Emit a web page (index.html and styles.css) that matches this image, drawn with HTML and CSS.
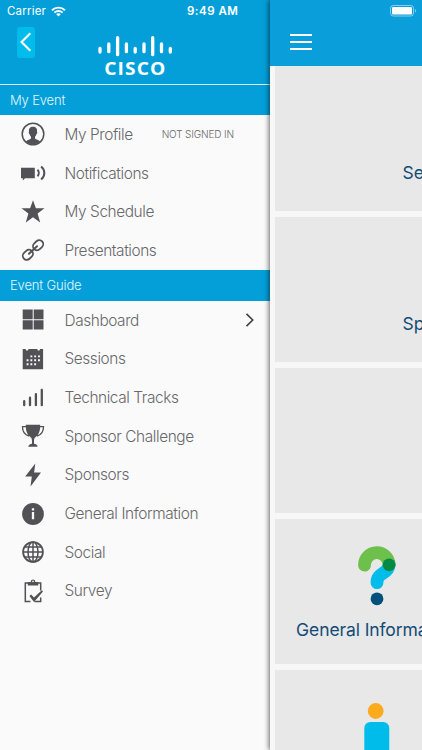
FILE: index.html
```html
<!DOCTYPE html>
<html lang="en">
<head>
<meta charset="utf-8">
<title>Event Guide</title>
<link rel="stylesheet" href="styles.css">
</head>
<body>
<div class="screen">
  <div class="status">
    <span class="carrier">Carrier</span>
    <svg class="wifi" width="15" height="11" viewBox="0 0 15 11" fill="none" stroke="#fff" stroke-width="1.9"><path d="M1 4.2C4.6.7 10.4.7 14 4.2M3.4 6.6c2.3-2.2 5.9-2.2 8.2 0"/><path d="M5.2 8.2c1.3-1.2 3.3-1.2 4.6 0L7.5 10.6z" fill="#fff" stroke="none"/></svg>
    <span class="time">9:49 AM</span>
    <svg class="battery" width="27" height="12" viewBox="0 0 27 12"><rect x=".5" y=".5" width="23" height="10.5" rx="2.8" fill="none" stroke="#fff" stroke-opacity=".5"/><rect x="2" y="2" width="20" height="7.5" rx="1.3" fill="#fff"/><path d="M25 4v3.6c1.6-.5 1.6-3.1 0-3.6z" fill="#fff" fill-opacity=".5"/></svg>
  </div>

  <nav class="menu">
    <header class="brand">
      <div class="back"><svg width="18" height="31" viewBox="0 0 18 31"><path d="M13.3 6.2 4.5 15l8.8 8.8" fill="none" stroke="#fff" stroke-width="2.1"/></svg></div>
      <svg class="logo" width="78" height="50" viewBox="96 34 78 50">
        <path d="M100 48.5v3.5M108.8 44v7.7M117.6 37.7v17M126.4 44v7.7M135.2 48.5v3.5M144 44v7.7M152.7 37.7v17M161.5 44v7.7M170.3 48.5v3.5" stroke="#fff" stroke-width="3.3" stroke-linecap="round"/>
        <text class="logo-text" x="104.3" y="74.9" textLength="62" lengthAdjust="spacingAndGlyphs">CISCO</text>
      </svg>
    </header>
    <h2 class="section">My Event</h2>
    <ul class="list">
      <li><svg class="icon" viewBox="0 0 24 24"><circle cx="12" cy="12" r="10.8" fill="none" stroke="#525256" stroke-width="1.5"/><path d="M12 4.7c-3 0-4.500 2-4 5-.6.1-.2 2.300.6 2.600.3 1.100.8 1.900 1.400 2.500v1.700c-1 1.300-3.700 1.200-5.200 2.900C8.200 22.800 15.800 22.800 19.200 19.400c-1.500-1.700-4.200-1.600-5.200-2.900v-1.700c.6-.6 1.100-1.400 1.400-2.500.8-.3 1.200-2.500.6-2.600.5-3-1-5-4-5z"/></svg><span>My Profile</span><small>NOT SIGNED IN</small></li>
      <li><svg class="icon wide" viewBox="0 0 26 24"><path d="M0 6.8h13.800v10.400H4L1.800 19.400v-2.200H0z"/><path d="M16.500 8.700c1.700 1.800 1.700 4.700 0 6.500M20.100 5.500c4.300 3.500 4.300 9.600 0 13" fill="none" stroke="#525256" stroke-width="2"/></svg><span>Notifications</span></li>
      <li><svg class="icon" viewBox="0 0 24 24"><path d="m12 .2 2.900 8h8.600l-6.900 5.400 2.600 9L12 17.300l-7.200 5.300 2.600-9L.5 8.200h8.600z"/></svg><span>My Schedule</span></li>
      <li><svg class="icon" viewBox="0 0 24 24" fill="none" stroke="#525256" stroke-width="1.8"><g transform="rotate(-43 12 12)"><rect x="-.5" y="8" width="11" height="8" rx="4"/><rect x="13.500" y="8" width="11" height="8" rx="4"/><path d="M6.500 12h11" stroke-width="2" stroke-linecap="round"/></g></svg><span>Presentations</span></li>
    </ul>
    <h2 class="section second">Event Guide</h2>
    <ul class="list">
      <li><svg class="icon" viewBox="0 0 24 24"><path d="M1.700 1.500h10v9.800h-10zM12.700 1.500h9.800v9.800h-9.800zM1.700 12.300h10v9.200h-10zM12.700 12.300h9.800v9.200h-9.800z"/></svg><span>Dashboard</span><svg class="chevron" width="10" height="16" viewBox="0 0 10 16"><path d="M1.500 1.800 7.700 8l-6.200 6.200" fill="none" stroke="#444448" stroke-width="1.700"/></svg></li>
      <li><svg class="icon" viewBox="0 0 24 24"><path d="M1.700 1.900h3c0 2 2.700 2 2.700 0h8.900c0 2 2.700 2 2.700 0h3.100v20.300H1.700z"/><path d="M9.400 9.400h10M5.600 13.300h13.500M5.600 17.200h9.800" fill="none" stroke="#fafafa" stroke-width="1.900" stroke-dasharray="1.900 1.900"/></svg><span>Sessions</span></li>
      <li><svg class="icon" viewBox="0 0 24 24"><path d="M3.200 20.200v-4M9 20.200v-7.500M14.900 20.200V9.200M20.800 20.200V4.800" stroke="#525256" stroke-width="2.300" stroke-linecap="round"/></svg><span>Technical Tracks</span></li>
      <li><svg class="icon" viewBox="0 0 24 24"><path d="M4.800.8h14.400c.2 5.500-1.300 10-4.500 12.200-1.500 1.100-1.700 2.200-1.700 4.500v2.200c1.500.3 3.400.8 3.700 3.100H7.300c.3-2.300 2.200-2.800 3.700-3.100v-2.200c0-2.300-.2-3.400-1.700-4.500C6.100 10.800 4.600 6.300 4.800.8z"/><path d="M5 2.700H1.500c0 5 2 8.100 6.500 9.300M19 2.700h3.500c0 5-2 8.100-6.500 9.300" fill="none" stroke="#525256" stroke-width="1.300"/></svg><span>Sponsor Challenge</span></li>
      <li><svg class="icon" viewBox="0 0 24 24"><path d="M14.300.5 4.200 13.500h6.600L9.500 23.500 20 9.600h-6.900z"/></svg><span>Sponsors</span></li>
      <li><svg class="icon" viewBox="0 0 24 24"><circle cx="12" cy="12" r="10.900"/><path d="M12 6.300v2.200M12 9.900v7.300" stroke="#fafafa" stroke-width="2.300"/></svg><span>General Information</span></li>
      <li><svg class="icon" viewBox="0 0 24 24" fill="none" stroke="#525256" stroke-width="1.500"><circle cx="12" cy="12" r="9.900" stroke-width="1.800"/><ellipse cx="12" cy="12" rx="5" ry="9.900"/><path d="M12 2v20M2 12h20M3.800 7.100h16.400M3.800 16.900h16.400"/></svg><span>Social</span></li>
      <li><svg class="icon" viewBox="0 0 24 24"><path d="M9.500 22.500H4.300V4h15.400v7.500M13.500 22.500h6.200v-4" fill="none" stroke="#525256" stroke-width="1.500"/><path d="M6.800 2.900h3C9.800-.3 14.300-.3 14.300 2.900h3v3.500H6.800z"/><circle cx="12" cy="2.400" r=".8" fill="#fafafa"/><path d="m8.500 17 1.600-1.500 2.900 3 7.800-7.200 1.200 1.100-9 10.700z"/></svg><span>Survey</span></li>
    </ul>
  </nav>

  <main class="dashboard">
    <header class="topbar"><div class="burger"><i></i><i></i><i></i></div></header>
    <div class="tiles">
      <section class="tile wide-tile"><span>Sessions</span></section>
      <section class="tile wide-tile"><span>Sponsors</span></section>
      <section class="tile"></section>
      <section class="tile info-tile">
        <svg width="38" height="61" viewBox="0 0 38 61" fill="none" stroke-linecap="round"><path d="M31.1 19.800C30.500 29.500 19 27 19 37.700" stroke="#00bceb" stroke-width="12.800"/><path d="M6.500 20.200A12.300 12.300 0 0 1 31.100 19.800" stroke="#6dc04b" stroke-width="12.800"/><circle cx="31.100" cy="19.800" r="6.400" fill="#048a43"/><circle cx="19" cy="53.800" r="6.400" fill="#03517b"/></svg>
        <span>General Information</span>
      </section>
      <section class="tile person-tile">
        <svg width="26" height="112" viewBox="0 0 26 112"><circle cx="11.700" cy="8" r="7.900" fill="#fbab1d"/><rect x="0.300" y="19" width="25" height="90" rx="6" fill="#00bceb"/></svg>
      </section>
    </div>
  </main>
</div>
</body>
</html>
```
FILE: styles.css
```css
* { box-sizing: border-box; }
body { margin: 0; font-family: Inter, "Liberation Sans", sans-serif; }
.screen { position: relative; display: flex; width: 422px; height: 750px; overflow: hidden; background: #f7f7f7; }

.status { position: absolute; z-index: 3; top: 0; left: 0; display: flex; width: 422px; height: 22px; padding: 0 5px 0 7px; align-items: center; color: #fff; }
.carrier { width: 38px; font-size: 11.5px; letter-spacing: .2px; white-space: nowrap; }
.wifi { margin-left: 6px; }
.time { margin-left: 121px; width: 60px; font-size: 11.5px; font-weight: 600; letter-spacing: .5px; white-space: nowrap; }
.battery { margin-left: auto; }

.menu { flex: 0 0 270px; height: 750px; background: #fafafa; }
.brand { display: flex; height: 85px; padding: 27px 0 0 17px; align-items: flex-start; background: #049fd9; border-bottom: 1px solid #d9f5fd; }
.back { width: 18px; height: 31px; border-radius: 3px; background: #00bceb; }
.back svg { display: block; }
.logo { margin: 7px 0 0 61px; overflow: visible; }
.logo-text { font-family: "Open Sans", sans-serif; font-size: 18px; font-weight: 700; letter-spacing: 1px; fill: #fff; }
.section { height: 30px; margin: 0; padding-left: 10px; background: #049fd9; color: #e3f7fd; font-size: 13px; font-weight: 300; line-height: 30px; letter-spacing: -.15px; }
.second { height: 31px; }
.list { margin: 0; padding: 0; list-style: none; }
.list li { display: flex; height: 38.7px; padding: 0 15px 0 21px; align-items: center; color: #68686c; font-size: 15.4px; font-weight: 300; letter-spacing: -.41px; white-space: nowrap; }
.list li > span { margin-left: 19.5px; }
.list small { margin-left: 29px; font-size: 10px; letter-spacing: -.15px; }
.icon { flex: none; width: 24px; height: 24px; fill: #525256; }
.icon[fill="none"] { fill: none; }
.icon.wide { width: 26px; margin-right: -2px; }
.chevron { margin-left: auto; }

.dashboard { z-index: 1; flex: 0 0 420px; background: #f7f7f7; box-shadow: -1px 0 5px rgba(0, 0, 0, .6); }
.topbar { height: 65.5px; padding: 34px 0 0 20px; background: #0a9fda; }
.burger { display: flex; width: 22px; flex-direction: column; gap: 5px; }
.burger i { height: 2.1px; background: #fff; }
.tiles { display: grid; grid-template-columns: 204px 204px; gap: 5.4px; padding-left: 5px; }
.tile { display: flex; height: 145.7px; flex-direction: column; align-items: center; background: #e8e8e8; color: #134b75; font-size: 17.5px; white-space: nowrap; }
.tile:nth-child(-n+3) { grid-column: 1 / 3; }
.tile:nth-child(n+4) { grid-column: 1; }
.wide-tile { align-items: flex-start; padding: 96px 0 0 127.5px; }
.info-tile { padding-top: 26px; letter-spacing: -.1px; }
.info-tile svg { flex: none; }
.info-tile span { margin-top: 13px; }
.person-tile { padding-top: 33px; overflow: hidden; }
.person-tile svg { flex: none; }
```
